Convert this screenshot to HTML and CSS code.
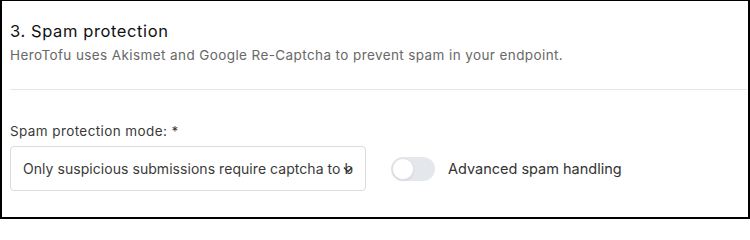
FILE: index.html
```html
<!DOCTYPE html>
<html lang="en">
<head>
<meta charset="utf-8">
<title>Spam protection</title>
<link rel="stylesheet" href="styles.css">
</head>
<body>
<div class="frame">
  <header class="section-head">
    <h2 class="title">3. Spam protection</h2>
    <p class="subtitle">HeroTofu uses Akismet and Google Re-Captcha to prevent spam in your endpoint.</p>
  </header>
  <hr class="divider">
  <div class="field">
    <label class="label">Spam protection mode: *</label>
    <div class="row">
      <div class="select">
        <span class="select-text">Only suspicious submissions require captcha to be solved</span>
        <svg class="chevron" width="10" height="7" viewBox="0 0 10 7"><path d="M1 1.5 L5 5.5 L9 1.5" fill="none" stroke="#333" stroke-width="1.5"/></svg>
      </div>
      <div class="switch-wrap">
        <span class="switch"><span class="knob"></span></span>
        <span class="switch-label">Advanced spam handling</span>
      </div>
    </div>
  </div>
</div>
</body>
</html>
```
FILE: styles.css
```css
html, body {
  margin: 0;
  padding: 0;
  background: #fff;
}
.frame {
  box-sizing: border-box;
  width: 750px;
  height: 219px;
  border: 2px solid #000;
  border-top-width: 1px;
  padding: 0 1px 0 8px;
  font-family: Inter, "Open Sans", sans-serif;
  overflow: hidden;
}
.section-head {
  padding-top: 18px;
}
.title {
  margin: 0;
  font-size: 16.5px;
  letter-spacing: 0.6px;
  line-height: 24px;
  font-weight: 400;
  color: #111;
}
.subtitle {
  margin: 2px 0 0 0;
  font-size: 13.5px;
  letter-spacing: 0.4px;
  line-height: 20px;
  color: #686868;
}
.divider {
  border: 0;
  border-top: 1px solid #e6e6e6;
  margin: 24px 0 0 0;
}
.field {
  padding-top: 32px;
}
.label {
  display: block;
  font-size: 13.5px;
  letter-spacing: 0.4px;
  line-height: 18px;
  color: #3a3a3a;
}
.row {
  display: flex;
  align-items: center;
  margin-top: 6px;
}
.select {
  position: relative;
  box-sizing: border-box;
  width: 356px;
  height: 45px;
  border: 1px solid #dcdcdc;
  border-radius: 4px;
  padding: 0 12px 0 12px;
  display: flex;
  align-items: center;
  overflow: hidden;
}
.select-text {
  white-space: nowrap;
  overflow: hidden;
  font-size: 14px;
  letter-spacing: 0.05px;
  color: #3a3a3a;
}
.chevron {
  position: absolute;
  right: 12px;
  top: 19px;
}
.switch-wrap {
  display: flex;
  align-items: center;
  margin-left: 25px;
}
.switch {
  position: relative;
  display: block;
  width: 44px;
  height: 24px;
  border-radius: 12px;
  background: #e4e7ec;
}
.knob {
  position: absolute;
  left: 1px;
  top: 1px;
  box-sizing: border-box;
  width: 22px;
  height: 22px;
  border-radius: 50%;
  background: #fff;
  border: 1px solid #e2e2e2;
  box-shadow: 0 1px 2px rgba(0,0,0,0.08);
}
.switch-label {
  margin-left: 13px;
  font-size: 14.5px;
  color: #333;
}
```
